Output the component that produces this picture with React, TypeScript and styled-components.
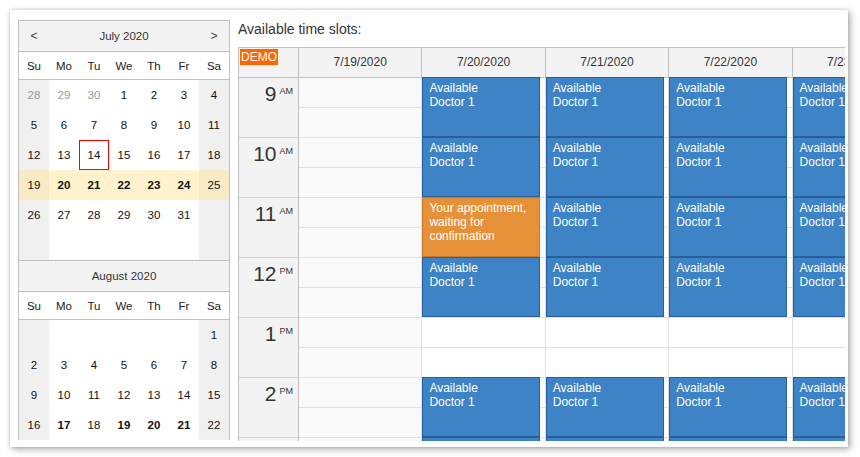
import * as React from "react";
import styled, { createGlobalStyle, css } from "styled-components";

const GlobalStyle = createGlobalStyle`
  html, body {
    margin: 0;
    padding: 0;
    background: #fff;
  }
  body {
    font-family: "Liberation Sans", Arial, sans-serif;
    color: #333;
  }
`;

const Card = styled.div`
  box-sizing: border-box;
  margin: 10px;
  width: 838px;
  height: 437px;
  padding: 10px 3px 6px 8px;
  background: #fff;
  box-shadow: 2px 2px 7px rgba(0, 0, 0, 0.35), 0 0 3px rgba(0, 0, 0, 0.12);
`;

const Layout = styled.div`
  display: flex;
  gap: 8px;
  height: 100%;
  overflow: hidden;
`;

/* ---------- navigator ---------- */

const Navigator = styled.div`
  display: flex;
  flex-direction: column;
  flex-shrink: 0;
  width: 212px;
`;

const Month = styled.div`
  border: 1px solid #c0c0c0;
  border-bottom: none;
  font-size: 11.5px;
`;

const MonthTitle = styled.div`
  display: grid;
  grid-template-columns: 30px 1fr 30px;
  align-items: center;
  height: 30px;
  background: #f3f3f3;
  border-bottom: 1px solid #c0c0c0;
  color: #333;
  text-align: center;
`;

const NavArrow = styled.span`
  font-size: 12px;
  color: #444;
`;

const DayNames = styled.div`
  display: grid;
  grid-template-columns: repeat(7, 30px);
  height: 27px;
  align-items: center;
  border-bottom: 1px solid #c0c0c0;
  text-align: center;
  color: #222;
`;

const DaysGrid = styled.div`
  display: grid;
  grid-template-columns: repeat(7, 30px);
  grid-auto-rows: 30px;
`;

const DayCell = styled.div<{
  $weekend: boolean;
  $week: boolean;
  $other: boolean;
  $bold: boolean;
  $today: boolean;
}>`
  box-sizing: border-box;
  display: flex;
  align-items: center;
  justify-content: center;
  color: ${(p) => (p.$other ? "#999" : "#111")};
  font-weight: ${(p) => (p.$bold ? "bold" : "normal")};
  background: ${(p) =>
    p.$week ? (p.$weekend ? "#f7eac4" : "#fff2cc") : p.$weekend ? "#f0f0f0" : "#fff"};
  ${(p) =>
    p.$today &&
    css`
      border: 1px solid #ff0000;
    `}
`;

type Day = { n?: number; other?: boolean; bold?: boolean; today?: boolean; week?: boolean };

const dayNames = ["Su", "Mo", "Tu", "We", "Th", "Fr", "Sa"];

// lead = trailing days of the previous month (null for a blank cell)
function buildMonth(
  lead: (number | null)[],
  days: number,
  bold: number[],
  today: number | null,
  week: number[],
  rows: number
): Day[] {
  const cells: Day[] = lead.map((n) => (n === null ? {} : { n, other: true }));
  for (let d = 1; d <= days; d++) {
    cells.push({
      n: d,
      bold: bold.includes(d),
      today: d === today,
      week: week.includes(d),
    });
  }
  while (cells.length < rows * 7) cells.push({});
  return cells.slice(0, rows * 7);
}

const months = [
  {
    title: "July 2020",
    arrows: true,
    days: buildMonth([28, 29, 30], 31, [20, 21, 22, 23, 24], 14, [19, 20, 21, 22, 23, 24, 25], 6),
  },
  {
    title: "August 2020",
    arrows: false,
    days: buildMonth([null, null, null, null, null, null], 31, [17, 19, 20, 21], null, [], 4),
  },
];

function MonthView({ title, arrows, days }: { title: string; arrows: boolean; days: Day[] }) {
  return (
    <Month>
      <MonthTitle>
        <NavArrow>{arrows ? "<" : ""}</NavArrow>
        <span>{title}</span>
        <NavArrow>{arrows ? ">" : ""}</NavArrow>
      </MonthTitle>
      <DayNames>
        {dayNames.map((d) => (
          <span key={d}>{d}</span>
        ))}
      </DayNames>
      <DaysGrid>
        {days.map((d, i) => {
          const col = i % 7;
          return (
            <DayCell
              key={i}
              $weekend={col === 0 || col === 6}
              $week={!!d.week}
              $other={!!d.other}
              $bold={!!d.bold}
              $today={!!d.today}
            >
              {d.n ?? ""}
            </DayCell>
          );
        })}
      </DaysGrid>
    </Month>
  );
}

/* ---------- scheduler ---------- */

const Scheduler = styled.div`
  flex: 1 1 0;
  min-width: 0;
  display: flex;
  flex-direction: column;
`;

const Title = styled.div`
  font-size: 14px;
  line-height: 18px;
  margin-bottom: 9px;
  color: #333;
`;

const Frame = styled.div`
  border-left: 1px solid #c0c0c0;
  border-top: 1px solid #c0c0c0;
  width: max-content;
`;

const HeaderRow = styled.div`
  display: flex;
  height: 30px;
  box-sizing: border-box;
  background: #f3f3f3;
  border-bottom: 1px solid #c0c0c0;
`;

const Corner = styled.div`
  position: relative;
  box-sizing: border-box;
  width: 60px;
  border-right: 1px solid #c0c0c0;
`;

const DemoBadge = styled.span`
  position: absolute;
  left: 1px;
  top: 1px;
  padding: 0 1px;
  background: #ff6600;
  color: #fff;
  font-size: 12px;
  line-height: 16px;
`;

const ColumnHeader = styled.div`
  box-sizing: border-box;
  flex-shrink: 0;
  width: 123.4px;
  border-right: 1px solid #c0c0c0;
  text-align: center;
  font-size: 12px;
  line-height: 29px;
  color: #333;
`;

const Body = styled.div`
  display: flex;
`;

const RowHeaders = styled.div`
  box-sizing: border-box;
  width: 60px;
  flex-shrink: 0;
  background: #f3f3f3;
  border-right: 1px solid #c0c0c0;
`;

const HourCell = styled.div`
  box-sizing: border-box;
  height: 60px;
  display: flex;
  justify-content: flex-end;
  align-items: flex-start;
  padding: 5px 5px 0 0;
  border-bottom: 1px solid #d0d0d0;
  color: #333;
`;

const HourNumber = styled.span`
  font-size: 21px;
  line-height: 21px;
`;

const HourSuffix = styled.span`
  font-size: 9px;
  line-height: 9px;
  margin: 4px 0 0 3px;
`;

const DayColumn = styled.div<{ $off: boolean }>`
  position: relative;
  box-sizing: border-box;
  flex-shrink: 0;
  width: 123.4px;
  border-right: 1px solid #e0e0e0;
  background: ${(p) => (p.$off ? "#f9f9f9" : "#fff")};
`;

const SlotCell = styled.div`
  box-sizing: border-box;
  height: 30px;
  border-bottom: 1px solid #e0e0e0;
`;

const EventBox = styled.div<{ $kind: "free" | "mine" }>`
  position: absolute;
  left: 0;
  width: 118px;
  height: 60px;
  box-sizing: border-box;
  padding: 3px 4px 0 6px;
  font-size: 12px;
  line-height: 14px;
  color: #fff;
  overflow: hidden;
  background: ${(p) => (p.$kind === "mine" ? "#e69138" : "#3d83c5")};
  border: 1px solid ${(p) => (p.$kind === "mine" ? "#c97a26" : "#255f9d")};
`;

const hours = [
  { n: "9", s: "AM" },
  { n: "10", s: "AM" },
  { n: "11", s: "AM" },
  { n: "12", s: "PM" },
  { n: "1", s: "PM" },
  { n: "2", s: "PM" },
];

// the 3 PM slot only shows its top edge below the 2 PM row
const freeHours = [0, 1, 2, 3, 5, 6];

const columns = [
  { date: "7/19/2020", off: true, pending: -1, slots: [] as number[] },
  { date: "7/20/2020", off: false, pending: 2, slots: freeHours },
  { date: "7/21/2020", off: false, pending: -1, slots: freeHours },
  { date: "7/22/2020", off: false, pending: -1, slots: freeHours },
  { date: "7/23/2020", off: false, pending: -1, slots: freeHours },
];

function eventText(hour: number, mine: boolean) {
  if (mine) return "Your appointment, waiting for confirmation";
  if (hour >= hours.length) return null;
  return (
    <>
      Available
      <br />
      Doctor 1
    </>
  );
}

export default function App() {
  return (
    <>
      <GlobalStyle />
      <Card>
        <Layout>
          <Navigator>
            {months.map((m) => (
              <MonthView key={m.title} title={m.title} arrows={m.arrows} days={m.days} />
            ))}
          </Navigator>

          <Scheduler>
            <Title>Available time slots:</Title>
            <Frame>
              <HeaderRow>
                <Corner>
                  <DemoBadge>DEMO</DemoBadge>
                </Corner>
                {columns.map((c) => (
                  <ColumnHeader key={c.date}>{c.date}</ColumnHeader>
                ))}
              </HeaderRow>
              <Body>
                <RowHeaders>
                  {hours.map((h) => (
                    <HourCell key={h.n}>
                      <HourNumber>{h.n}</HourNumber>
                      <HourSuffix>{h.s}</HourSuffix>
                    </HourCell>
                  ))}
                  <HourCell />
                </RowHeaders>
                {columns.map((c) => (
                  <DayColumn key={c.date} $off={c.off}>
                    {[...hours, null].map((h, i) => (
                      <React.Fragment key={i}>
                        <SlotCell />
                        <SlotCell />
                      </React.Fragment>
                    ))}
                    {c.slots.map((k) => {
                      const mine = k === c.pending;
                      return (
                        <EventBox key={k} $kind={mine ? "mine" : "free"} style={{ top: k * 60 - 1 }}>
                          {eventText(k, mine)}
                        </EventBox>
                      );
                    })}
                  </DayColumn>
                ))}
              </Body>
            </Frame>
          </Scheduler>
        </Layout>
      </Card>
    </>
  );
}
